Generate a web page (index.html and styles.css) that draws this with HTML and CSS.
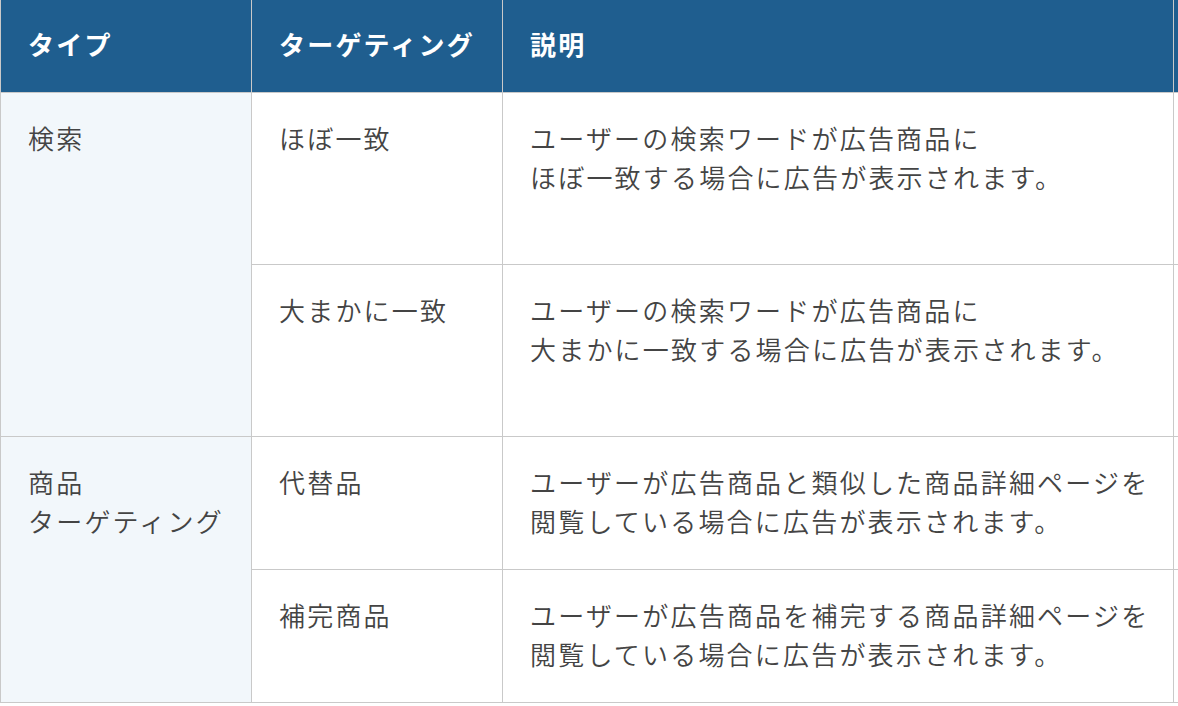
FILE: index.html
```html
<!DOCTYPE html>
<html lang="ja">
<head>
<meta charset="utf-8">
<title>ターゲティング</title>
<link rel="stylesheet" href="styles.css">
</head>
<body>
<table class="spec">
  <colgroup>
    <col class="c-type">
    <col class="c-target">
    <col class="c-desc">
    <col class="c-extra">
  </colgroup>
  <thead>
    <tr>
      <th>タイプ</th>
      <th>ターゲティング</th>
      <th>説明</th>
      <th></th>
    </tr>
  </thead>
  <tbody>
    <tr class="tall">
      <td class="type" rowspan="2">検索</td>
      <td>ほぼ一致</td>
      <td>ユーザーの検索ワードが広告商品に<br>ほぼ一致する場合に広告が表示されます。</td>
      <td></td>
    </tr>
    <tr class="tall">
      <td>大まかに一致</td>
      <td>ユーザーの検索ワードが広告商品に<br>大まかに一致する場合に広告が表示されます。</td>
      <td></td>
    </tr>
    <tr>
      <td class="type" rowspan="2">商品<br>ターゲティング</td>
      <td>代替品</td>
      <td>ユーザーが広告商品と類似した商品詳細ページを<br>閲覧している場合に広告が表示されます。</td>
      <td></td>
    </tr>
    <tr>
      <td>補完商品</td>
      <td>ユーザーが広告商品を補完する商品詳細ページを<br>閲覧している場合に広告が表示されます。</td>
      <td></td>
    </tr>
  </tbody>
</table>
</body>
</html>
```
FILE: styles.css
```css
html, body {
  margin: 0;
  padding: 0;
  overflow: hidden;
  background: #ffffff;
}

body {
  font-family: "Noto Sans CJK JP", "Noto Sans", sans-serif;
  color: #444444;
}

.spec {
  border-collapse: collapse;
  table-layout: fixed;
  width: 1400px;
}

.c-type { width: 251px; }
.c-target { width: 251px; }
.c-desc { width: 671px; }
.c-extra { width: 227px; }

.spec th,
.spec td {
  text-align: left;
  vertical-align: top;
  font-size: 26px;
  line-height: 39px;
  letter-spacing: 2.2px;
  padding: 25px 0 29px 27px;
  border: 1px solid #c9c9c9;
  white-space: nowrap;
}

.spec td {
  font-weight: 350;
}

.spec th {
  background: #1f5e8f;
  color: #ffffff;
  font-weight: 700;
  height: 40px;
  padding-top: 24px;
  padding-bottom: 28px;
  border-top: none;
  border-color: #c9c9c9;
}

.spec td.type {
  background: #f2f7fb;
}

.spec tr.tall td {
  height: 117px;
}
```
